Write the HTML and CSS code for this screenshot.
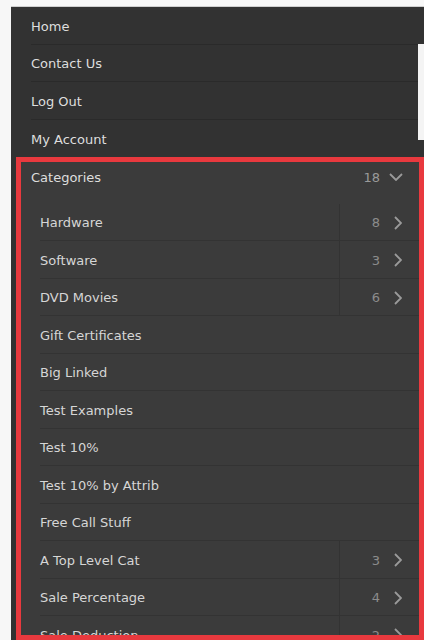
FILE: index.html
```html
<!DOCTYPE html>
<html>
<head>
<meta charset="utf-8">
<link rel="stylesheet" href="styles.css">
</head>
<body>
<div class="page">
  <nav class="menu">
    <ul class="top">
      <li class="item"><span class="row">Home</span></li>
      <li class="item"><span class="row">Contact Us</span></li>
      <li class="item"><span class="row">Log Out</span></li>
      <li class="item"><span class="row">My Account</span></li>
    </ul>
    <div class="cats">
      <div class="cats-head">
        <span class="label">Categories</span>
        <span class="head-count">18</span>
        <svg class="chev-down" width="14" height="8" viewBox="0 0 14 8"><path d="M1 1 L7 7 L13 1" fill="none" stroke="#9a9a9a" stroke-width="1.8"/></svg>
      </div>
      <ul class="sub">
        <li class="sub-item"><span class="name">Hardware</span><span class="toggle"><span class="count">8</span><svg width="8" height="14" viewBox="0 0 8 14"><path d="M1 1 L7 7 L1 13" fill="none" stroke="#9a9a9a" stroke-width="1.8"/></svg></span></li>
        <li class="sub-item"><span class="name">Software</span><span class="toggle"><span class="count">3</span><svg width="8" height="14" viewBox="0 0 8 14"><path d="M1 1 L7 7 L1 13" fill="none" stroke="#9a9a9a" stroke-width="1.8"/></svg></span></li>
        <li class="sub-item"><span class="name">DVD Movies</span><span class="toggle"><span class="count">6</span><svg width="8" height="14" viewBox="0 0 8 14"><path d="M1 1 L7 7 L1 13" fill="none" stroke="#9a9a9a" stroke-width="1.8"/></svg></span></li>
        <li class="sub-item"><span class="name">Gift Certificates</span></li>
        <li class="sub-item"><span class="name">Big Linked</span></li>
        <li class="sub-item"><span class="name">Test Examples</span></li>
        <li class="sub-item"><span class="name">Test 10%</span></li>
        <li class="sub-item"><span class="name">Test 10% by Attrib</span></li>
        <li class="sub-item"><span class="name">Free Call Stuff</span></li>
        <li class="sub-item"><span class="name">A Top Level Cat</span><span class="toggle"><span class="count">3</span><svg width="8" height="14" viewBox="0 0 8 14"><path d="M1 1 L7 7 L1 13" fill="none" stroke="#9a9a9a" stroke-width="1.8"/></svg></span></li>
        <li class="sub-item"><span class="name">Sale Percentage</span><span class="toggle"><span class="count">4</span><svg width="8" height="14" viewBox="0 0 8 14"><path d="M1 1 L7 7 L1 13" fill="none" stroke="#9a9a9a" stroke-width="1.8"/></svg></span></li>
        <li class="sub-item"><span class="name">Sale Deduction</span><span class="toggle"><span class="count">2</span><svg width="8" height="14" viewBox="0 0 8 14"><path d="M1 1 L7 7 L1 13" fill="none" stroke="#9a9a9a" stroke-width="1.8"/></svg></span></li>
      </ul>
    </div>
  </nav>
  <div class="track"></div>
</div>
</body>
</html>
```
FILE: styles.css
```css
html, body {
  margin: 0;
  height: 640px;
  overflow: hidden;
  background: #f7f7f7;
}
body {
  font-family: "DejaVu Sans", Verdana, sans-serif;
  font-size: 13px;
}
.page {
  position: relative;
  padding-top: 6px;
}
.menu {
  margin-left: 11px;
  background: #323232;
  border-top: 1px solid #cfcfcf;
  height: 633px;
}
.top {
  list-style: none;
  margin: 0;
  padding: 0;
}
.item {
  padding-left: 20px;
}
.row {
  display: flex;
  align-items: center;
  height: 37.5px;
  box-sizing: border-box;
  padding-top: 2px;
  border-bottom: 1px solid #2a2a2a;
  color: #dedede;
}
.item:last-child .row {
  border-bottom: none;
}
.cats {
  margin-left: 5px;
  border: 5px solid #e8393e;
  background: #3b3b3b;
  height: 483px;
  box-sizing: border-box;
  overflow: hidden;
}
.cats-head {
  display: flex;
  align-items: center;
  height: 28px;
  padding: 1px 16px 0 10px;
  color: #dedede;
}
.label {
  flex: 1;
}
.head-count {
  color: #9a9a9a;
  margin-right: 9px;
}
.sub {
  list-style: none;
  margin: 12.5px 0 0;
  padding: 0 0 0 19px;
}
.sub-item {
  display: flex;
  height: 37.5px;
  box-sizing: border-box;
  border-bottom: 1px solid #333333;
}
.name {
  flex: 1;
  display: flex;
  align-items: center;
  padding-top: 2px;
  color: #d6d6d6;
}
.toggle {
  width: 80px;
  box-sizing: border-box;
  border-left: 1px solid #333333;
  display: flex;
  align-items: center;
  justify-content: flex-end;
  gap: 14px;
  padding: 2px 17px 0 0;
}
.count {
  color: #8c8c8c;
}
.track {
  position: absolute;
  right: 0;
  top: 44px;
  width: 6px;
  height: 96px;
  background: #f4f4f4;
}
```
